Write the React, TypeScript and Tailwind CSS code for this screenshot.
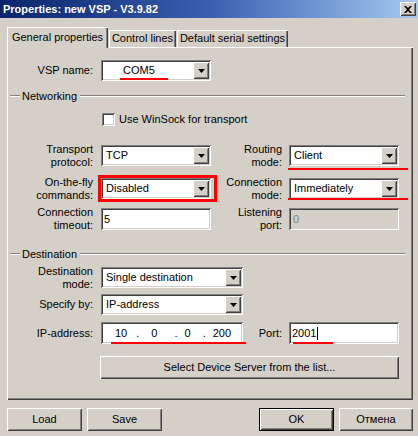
import React from "react";

const SUNKEN =
  "shadow-[inset_1px_1px_0_#808080,inset_-1px_-1px_0_#ffffff,inset_2px_2px_0_#404040,inset_-2px_-2px_0_#d4d0c8]";
const RAISED =
  "shadow-[inset_1px_1px_0_#ffffff,inset_-1px_-1px_0_#404040,inset_2px_2px_0_#d4d0c8,inset_-2px_-2px_0_#808080]";

function Arrow() {
  return (
    <div className={`w-[16px] h-[17px] shrink-0 bg-[#d4d0c8] flex items-center justify-center ${RAISED}`}>
      <svg width="7" height="4" viewBox="0 0 7 4">
        <path d="M0 0H7L3.5 4Z" fill="#000" />
      </svg>
    </div>
  );
}

function Combo({ w, children, pl = "pl-[3px]" }: { w: string; children: React.ReactNode; pl?: string }) {
  return (
    <div className={`${w} h-[21px] shrink-0 bg-white p-[2px] flex ${SUNKEN}`}>
      <div className={`flex-1 flex items-center whitespace-nowrap ${pl}`}>{children}</div>
      <Arrow />
    </div>
  );
}

function Label({ w, children }: { w: string; children: React.ReactNode }) {
  return <div className={`${w} shrink-0 text-right leading-[13px]`}>{children}</div>;
}

function Separator({ label, mt }: { label: string; mt: string }) {
  return (
    <div className={`flex items-center h-[14px] ${mt}`}>
      <div className="ml-[3px] w-[10px] h-[2px] border-t border-t-[#808080] border-b border-b-white" />
      <div className="ml-[2px] px-0 leading-[13px]">{label}</div>
      <div className="ml-[3px] mr-[8px] flex-1 h-[2px] border-t border-t-[#808080] border-b border-b-white" />
    </div>
  );
}

function Button({ w, children }: { w: string; children: React.ReactNode }) {
  return (
    <div className={`${w} h-[23px] shrink-0 bg-[#d4d0c8] flex items-center justify-center ${RAISED}`}>
      {children}
    </div>
  );
}

export default function App() {
  return (
    <div className="relative w-[418px] h-[436px] overflow-hidden bg-[#d4d0c8] text-black text-[11px] leading-[13px] font-['Liberation_Sans',Arial,sans-serif]">
      {/* Title bar */}
      <div className="h-[18px] flex items-center bg-linear-to-r from-[#0a246a] via-[#3a5fb0] to-[#a6caf0]">
        <div className="pl-[3px] text-white font-bold text-[11px]">Properties: new VSP - V3.9.82</div>
        <div className={`ml-auto mr-[2px] w-[16px] h-[14px] bg-[#d4d0c8] flex items-center justify-center ${RAISED}`}>
          <svg width="8" height="7" viewBox="0 0 8 7">
            <path d="M0 0h2l2 2 2-2h2L5 3.5 8 7H6L4 5 2 7H0l3-3.5z" fill="#000" />
          </svg>
        </div>
      </div>

      {/* Tabs */}
      <div className="flex items-end h-[20px] mt-[9px] pl-[7px]">
        <div className="relative z-10 w-[101px] h-[21px] -mb-[1px] bg-[#d4d0c8] flex items-center justify-center pb-[1px] shadow-[inset_1px_1px_0_#ffffff,inset_-1px_0_0_#404040,inset_-2px_0_0_#808080]">
          General properties
        </div>
        <div className="ml-[1px] w-[67px] h-[17px] bg-[#d4d0c8] flex items-center justify-center shadow-[inset_1px_1px_0_#ffffff,inset_-1px_0_0_#404040,inset_-2px_0_0_#808080]">
          Control lines
        </div>
        <div className="ml-[1px] w-[111px] h-[17px] bg-[#d4d0c8] flex items-center justify-center shadow-[inset_1px_1px_0_#ffffff,inset_-1px_0_0_#404040,inset_-2px_0_0_#808080]">
          Default serial settings
        </div>
      </div>

      {/* Panel */}
      <div className="ml-[7px] w-[406px] h-[353px] flex flex-col shadow-[inset_1px_1px_0_#ffffff,inset_-1px_-1px_0_#404040,inset_-2px_-2px_0_#808080]">
        {/* VSP name */}
        <div className="flex items-center h-[21px] mt-[13px]">
          <Label w="w-[86px]">VSP name:</Label>
          <div className="ml-[8px]">
            <Combo w="w-[110px]" pl="pl-[20px]">COM5</Combo>
          </div>
        </div>

        <Separator label="Networking" mt="mt-[8px]" />

        {/* Checkbox */}
        <div className="flex items-center h-[13px] mt-[10px]">
          <div className={`ml-[95px] w-[13px] h-[13px] bg-white ${SUNKEN}`} />
          <div className="ml-[4px]">Use WinSock for transport</div>
        </div>

        {/* Transport / Routing */}
        <div className="flex items-center h-[21px] mt-[19px]">
          <Label w="w-[86px]">
            Transport
            <br />
            protocol:
          </Label>
          <div className="ml-[8px]">
            <Combo w="w-[110px]">TCP</Combo>
          </div>
          <Label w="w-[71px]">
            Routing
            <br />
            mode:
          </Label>
          <div className="ml-[7px]">
            <Combo w="w-[110px]">Client</Combo>
          </div>
        </div>

        {/* On-the-fly / Connection mode */}
        <div className="flex items-center h-[21px] mt-[12px]">
          <Label w="w-[86px]">
            On-the-fly
            <br />
            commands:
          </Label>
          <div className="ml-[8px]">
            <Combo w="w-[110px]">Disabled</Combo>
          </div>
          <Label w="w-[71px]">
            Connection
            <br />
            mode:
          </Label>
          <div className="ml-[7px]">
            <Combo w="w-[110px]">Immediately</Combo>
          </div>
        </div>

        {/* Timeout / Listening port */}
        <div className="flex items-center h-[22px] mt-[9px]">
          <Label w="w-[86px]">
            Connection
            <br />
            timeout:
          </Label>
          <div className={`ml-[8px] w-[110px] h-[22px] bg-white flex items-center pl-[3px] ${SUNKEN}`}>5</div>
          <Label w="w-[71px]">
            Listening
            <br />
            port:
          </Label>
          <div className={`ml-[7px] w-[110px] h-[22px] bg-[#d4d0c8] flex items-center pl-[4px] text-[#808080] ${SUNKEN}`}>
            0
          </div>
        </div>

        <Separator label="Destination" mt="mt-[17px]" />

        {/* Destination mode */}
        <div className="flex items-center h-[21px] mt-[6px]">
          <Label w="w-[86px]">
            Destination
            <br />
            mode:
          </Label>
          <div className="ml-[8px]">
            <Combo w="w-[142px]">Single destination</Combo>
          </div>
        </div>

        {/* Specify by */}
        <div className="flex items-center h-[21px] mt-[6px]">
          <Label w="w-[86px]">Specify by:</Label>
          <div className="ml-[8px]">
            <Combo w="w-[142px]">IP-address</Combo>
          </div>
        </div>

        {/* IP / Port */}
        <div className="flex items-center h-[22px] mt-[7px]">
          <Label w="w-[86px]">IP-address:</Label>
          <div className={`ml-[8px] w-[142px] h-[22px] shrink-0 bg-white flex items-center ${SUNKEN}`}>
            <span className="ml-[14px]">10</span>
            <span className="ml-[9px]">.</span>
            <span className="ml-[12px]">0</span>
            <span className="ml-[17px]">.</span>
            <span className="ml-[7px]">0</span>
            <span className="ml-[12px]">.</span>
            <span className="ml-[7px]">200</span>
          </div>
          <Label w="w-[39px]">Port:</Label>
          <div className={`ml-[7px] w-[110px] h-[22px] shrink-0 bg-white flex items-center pl-[3px] ${SUNKEN}`}>
            2001
            <span className="ml-[1px] w-[1px] h-[13px] bg-black" />
          </div>
        </div>

        {/* Select button */}
        <div className="flex mt-[12px]">
          <div className="ml-[93px]">
            <Button w="w-[299px]">Select Device Server from the list...</Button>
          </div>
        </div>
      </div>

      {/* Bottom buttons */}
      <div className="flex mt-[8px] pl-[7px]">
        <Button w="w-[75px]">Load</Button>
        <div className="ml-[5px]">
          <Button w="w-[75px]">Save</Button>
        </div>
        <div className="ml-[97px] w-[75px] h-[23px] border border-black">
          <div className={`w-full h-full bg-[#d4d0c8] flex items-center justify-center ${RAISED}`}>OK</div>
        </div>
        <div className="ml-[5px]">
          <Button w="w-[74px]">Отмена</Button>
        </div>
      </div>

      {/* Red annotations */}
      <div className="absolute left-[120px] top-[78px] w-[48px] h-[2px] bg-[#ff0000]" />
      <div className="absolute left-[98px] top-[175px] w-[119px] h-[27px] border-[3px] border-[#ff0000]" />
      <div className="absolute left-[288px] top-[168px] w-[120px] h-[2px] bg-[#ff0000]" />
      <div className="absolute left-[288px] top-[198px] w-[120px] h-[2px] bg-[#ff0000]" />
      <div className="absolute left-[111px] top-[342px] w-[135px] h-[2px] bg-[#ff0000]" />
      <div className="absolute left-[293px] top-[342px] w-[40px] h-[2px] bg-[#ff0000]" />
    </div>
  );
}
